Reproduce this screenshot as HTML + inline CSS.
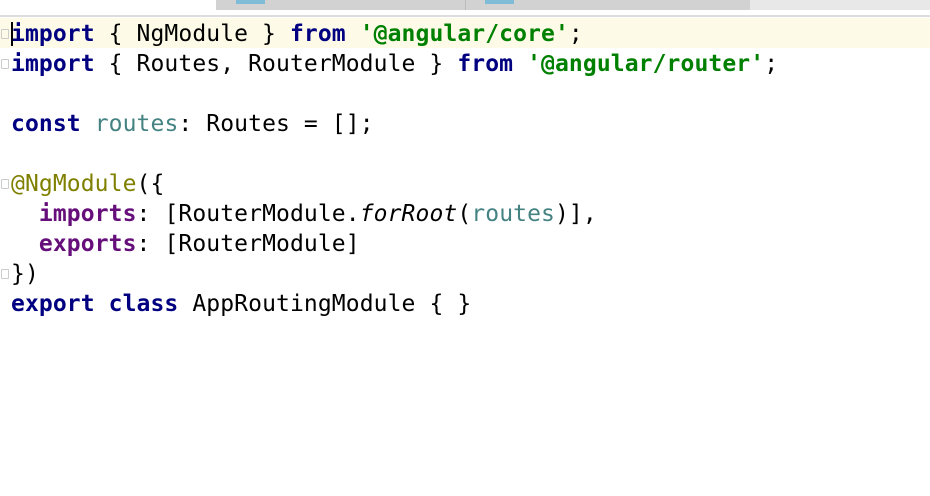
<!DOCTYPE html>
<html><head><meta charset="utf-8"><style>
html,body{margin:0;padding:0;width:930px;height:496px;background:#fff;overflow:hidden;position:relative}
.tabs{position:absolute;left:216px;top:0;width:534px;height:10px;background:#d2d2d2}
.tabs2{position:absolute;left:750px;top:0;width:180px;height:10px;background:#e8e8e8}
.div{position:absolute;left:465px;top:0;width:1px;height:10px;background:#bbb}
.blue{position:absolute;top:0;height:4px;width:29px;background:#7fbcd8}
.sep{position:absolute;left:0;top:15px;width:930px;height:2px;background:#ddd}
.hl{position:absolute;left:0;top:18px;width:930px;height:30px;background:#fdfbe8}
.caret{position:absolute;left:11px;top:22px;width:2px;height:24px;background:#000}
pre{position:absolute;left:11px;top:19px;margin:0;font-family:"DejaVu Sans Mono","Liberation Mono",monospace;font-size:23px;line-height:30px;color:#000;letter-spacing:0.1px}
.k{color:#000080;font-weight:bold}
.s{color:#008000;font-weight:bold}
.v{color:#458383}
.a{color:#808000}
.p{color:#660e7a;font-weight:bold}
.i{font-style:italic}
.f{position:absolute;left:1px;width:8px;height:10px;border:1px solid #ccc;border-radius:1px;box-sizing:border-box}
</style></head><body>
<div class="tabs"></div><div class="tabs2"></div><div class="div"></div>
<div class="blue" style="left:236px"></div><div class="blue" style="left:485px"></div>
<div class="sep"></div>
<div class="hl"></div>
<div class="f" style="top:29px"></div><div class="f" style="top:59px"></div>
<div class="f" style="top:179px"></div><div class="f" style="top:269px"></div>
<pre><span class="k">import</span> { NgModule } <span class="k">from</span> <span class="s">'@angular/core'</span>;
<span class="k">import</span> { Routes, RouterModule } <span class="k">from</span> <span class="s">'@angular/router'</span>;

<span class="k">const</span> <span class="v">routes</span>: Routes = [];

<span class="a">@NgModule</span>({
  <span class="p">imports</span>: [RouterModule.<span class="i">forRoot</span>(<span class="v">routes</span>)],
  <span class="p">exports</span>: [RouterModule]
})
<span class="k">export</span> <span class="k">class</span> AppRoutingModule { }</pre>
<div class="caret"></div>
</body></html>
